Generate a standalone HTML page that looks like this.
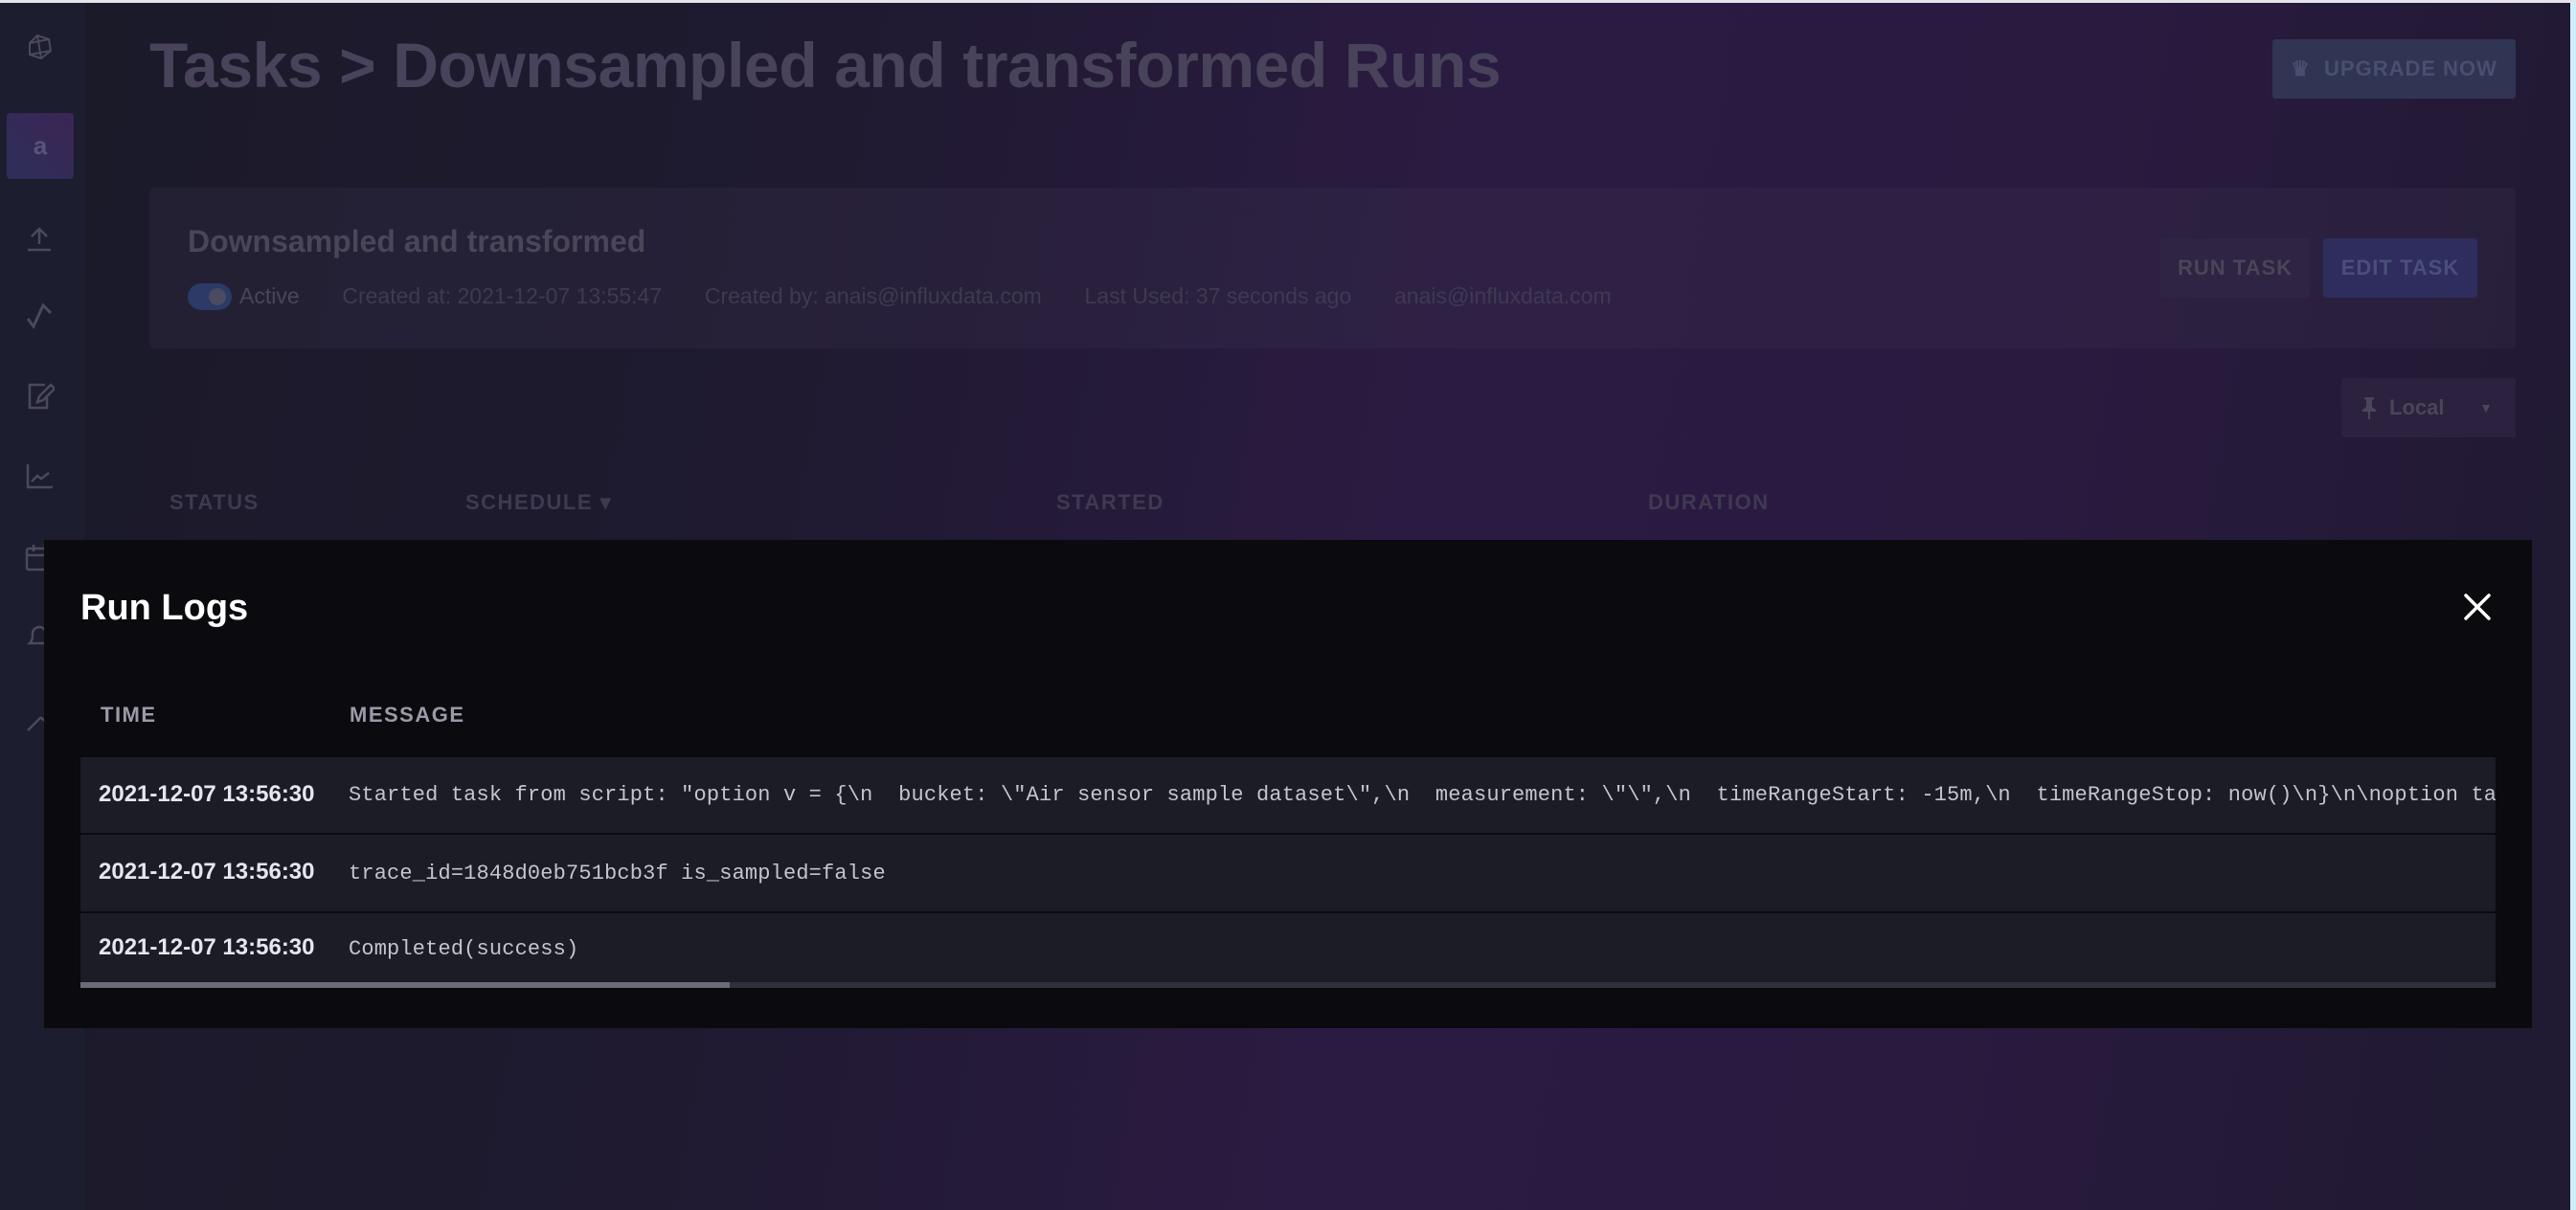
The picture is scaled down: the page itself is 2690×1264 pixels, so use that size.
<!DOCTYPE html>
<html><head><meta charset="utf-8"><style>
*{margin:0;padding:0;box-sizing:border-box}
body{width:2690px;height:1264px;overflow:hidden;position:relative;font-family:"Liberation Sans",sans-serif;background:linear-gradient(100deg,#1a1a28 0%,#1f1a30 30%,#2b1b43 55%,#2a1a40 75%,#211a33 95%);}
.topline{position:absolute;left:0;top:0;width:2690px;height:3px;background:#e4e4ea}
.rightline{position:absolute;right:0;top:3px;width:6px;height:1261px;background:#cfeefc}
.side{position:absolute;left:0;top:3px;width:89px;height:1261px;background:#1c1d2e}
.ico{position:absolute;left:25px;width:32px;height:32px}
.title{position:absolute;left:156px;top:30px;font-size:66px;font-weight:bold;color:#48435a;letter-spacing:-0.4px}
.card{position:absolute;left:156px;top:196px;width:2471px;height:168px;background:rgba(60,50,80,0.25);border-radius:4px}
.btn{position:absolute;font-weight:bold;font-size:22px;display:flex;align-items:center;justify-content:center;border-radius:3px;letter-spacing:1px}
.hdr{position:absolute;top:512px;font-size:22px;font-weight:bold;color:#3e3a50;letter-spacing:1.5px}
.modal{position:absolute;left:46px;top:564px;width:2598px;height:510px;background:#0a0a0f}
.row{position:absolute;left:38px;width:2522px;background:#1c1c27;overflow:hidden;white-space:pre}
.t{position:absolute;left:19px;font-size:24px;font-weight:bold;color:#e6e6ee}
.m{position:absolute;left:280px;font-family:"Liberation Mono",monospace;font-size:22px;color:#c4c4cc;letter-spacing:0.15px}
</style></head><body>
<div class="topline"></div>
<div class="side">
<svg class="ico" style="top:30px" viewBox="0 0 32 32" fill="none" stroke="#4a4a5a" stroke-width="2"><path d="M6 12 L14 4 L26 8 L28 20 L18 28 L6 24 Z M6 12 L26 8 M14 4 L18 28 M6 24 L28 20"/></svg>
<div style="position:absolute;left:7px;top:115px;width:70px;height:69px;border-radius:4px;background:linear-gradient(45deg,#2d2f5a,#3c2555);color:#58547a;font-size:26px;font-weight:bold;display:flex;align-items:center;justify-content:center">a</div>
<svg class="ico" style="top:230px" viewBox="0 0 32 32" fill="none" stroke="#4a4a5a" stroke-width="2.5"><path d="M16 22V6 M8 14l8-8 8 8 M4 28h24"/></svg>
<svg class="ico" style="top:310px" viewBox="0 0 32 32" fill="none" stroke="#4a4a5a" stroke-width="3"><path d="M4 20 L10 28 L20 6 L28 14"/></svg>
<svg class="ico" style="top:395px" viewBox="0 0 32 32" fill="none" stroke="#4a4a5a" stroke-width="2.5"><path d="M22 4H6v24h18V16 M14 22l2-6 12-12 4 4-12 12z"/></svg>
<svg class="ico" style="top:478px" viewBox="0 0 32 32" fill="none" stroke="#4a4a5a" stroke-width="2.5"><path d="M4 4v24h26 M8 22l6-6 4 3 8-6"/></svg>
<svg class="ico" style="top:563px" viewBox="0 0 32 32" fill="none" stroke="#4a4a5a" stroke-width="2.5"><rect x="3" y="7" width="26" height="22" rx="2"/><path d="M10 3v7 M22 3v7 M3 14h26"/></svg>
<svg class="ico" style="top:645px" viewBox="0 0 32 32" fill="none" stroke="#4a4a5a" stroke-width="2.5"><path d="M6 24c3-3 3-6 3-10a7 7 0 0 1 14 0c0 4 0 7 3 10z"/></svg>
<svg class="ico" style="top:732px" viewBox="0 0 32 32" fill="none" stroke="#4a4a5a" stroke-width="2.5"><path d="M4 28l14-14 M18 14a6 6 0 1 0 6-8"/></svg>
</div>
<div class="title">Tasks &gt; Downsampled and transformed Runs</div>
<div class="btn" style="left:2373px;top:41px;width:254px;height:62px;background:#2f3552;color:#4a4f70">♛&nbsp; UPGRADE NOW</div>
<div class="card">
<div style="position:absolute;left:40px;top:38px;font-size:32px;font-weight:bold;color:#4a4558">Downsampled and transformed</div>
<div style="position:absolute;left:40px;top:100px;width:46px;height:28px;border-radius:14px;background:#2b3a66"></div>
<div style="position:absolute;left:62px;top:105px;width:18px;height:18px;border-radius:9px;background:#4a4a60"></div>
<div style="position:absolute;left:94px;top:100px;font-size:23px;color:#4a4558;white-space:pre">Active       <span style="color:#3e3a50">Created at: 2021-12-07 13:55:47       Created by: anais@influxdata.com       Last Used: 37 seconds ago       anais@influxdata.com</span></div>
</div>
<div class="btn" style="left:2256px;top:249px;width:156px;height:62px;background:#2f2443;color:#4a4558">RUN TASK</div>
<div class="btn" style="left:2426px;top:249px;width:161px;height:62px;background:#2f2d5e;color:#4a4f78">EDIT TASK</div>
<div class="btn" style="left:2445px;top:395px;width:182px;height:62px;background:#2c2240;color:#4a4558;justify-content:flex-start;padding-left:20px;letter-spacing:0"><svg width="18" height="26" viewBox="0 0 18 26" fill="#4a4558" style="margin-right:12px"><path d="M4 2h10v2l-2 1v7l4 3v2H2v-2l4-3V5L4 4z M8 17h2v8H8z"/></svg>Local<span style="position:absolute;right:24px;font-size:14px">▼</span></div>
<div class="hdr" style="left:177px">STATUS</div>
<div class="hdr" style="left:486px">SCHEDULE ▾</div>
<div class="hdr" style="left:1103px">STARTED</div>
<div class="hdr" style="left:1721px">DURATION</div>
<div class="modal">
<div style="position:absolute;left:38px;top:50px;font-size:38px;font-weight:bold;color:#fff">Run Logs</div>
<svg style="position:absolute;left:2525px;top:54px" width="32" height="32" viewBox="0 0 32 32" stroke="#fff" stroke-width="3.5" stroke-linecap="round"><path d="M4 4L28 28M28 4L4 28"/></svg>
<div style="position:absolute;left:59px;top:170px;font-size:22px;font-weight:bold;color:#9a9aa8;letter-spacing:1.5px">TIME</div>
<div style="position:absolute;left:319px;top:170px;font-size:22px;font-weight:bold;color:#9a9aa8;letter-spacing:1.5px">MESSAGE</div>
<div class="row" style="top:227px;height:79px"><div class="t" style="top:25px">2021-12-07 13:56:30</div><div class="m" style="left:280px;top:27px">Started task from script: "option v = {\n  bucket: \"Air sensor sample dataset\",\n  measurement: \"\",\n  timeRangeStart: -15m,\n  timeRangeStop: now()\n}\n\noption task = {name: \"Downsampled and transformed\"}</div></div>
<div class="row" style="top:308px;height:80px"><div class="t" style="top:25px">2021-12-07 13:56:30</div><div class="m" style="top:28px">trace_id=1848d0eb751bcb3f is_sampled=false</div></div>
<div class="row" style="top:390px;height:74px"><div class="t" style="top:22px">2021-12-07 13:56:30</div><div class="m" style="top:25px">Completed(success)</div></div>
<div style="position:absolute;left:38px;top:462px;width:2522px;height:6px;background:#30303c"><div style="width:678px;height:6px;background:#6b6b78"></div></div>
</div>
<div class="rightline"></div>
</body></html>
